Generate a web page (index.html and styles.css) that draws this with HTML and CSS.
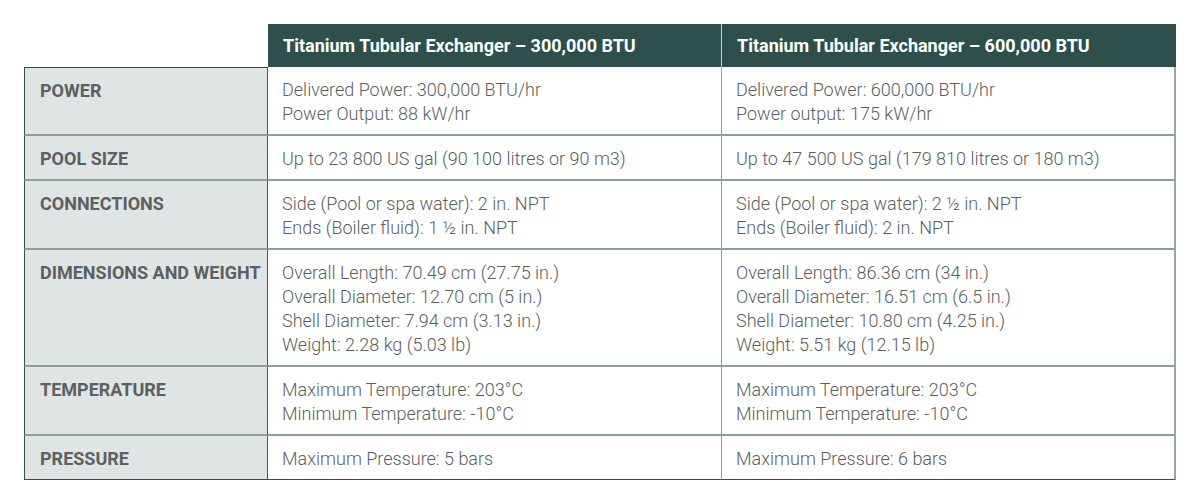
FILE: index.html
```html
<!DOCTYPE html>
<html>
<head>
<meta charset="utf-8">
<link rel="stylesheet" href="styles.css">
</head>
<body>
<div class="wrap">
<table class="specs">
  <colgroup>
    <col class="c-label">
    <col class="c-val">
    <col class="c-val">
  </colgroup>
  <thead>
    <tr>
      <th class="blank"></th>
      <th class="head">Titanium Tubular Exchanger – 300,000 BTU</th>
      <th class="head last">Titanium Tubular Exchanger – 600,000 BTU</th>
    </tr>
  </thead>
  <tbody>
    <tr>
      <th class="label">POWER</th>
      <td>Delivered Power: 300,000 BTU/hr<br>Power Output: 88 kW/hr</td>
      <td class="last">Delivered Power: 600,000 BTU/hr<br>Power output: 175 kW/hr</td>
    </tr>
    <tr>
      <th class="label">POOL SIZE</th>
      <td>Up to 23 800 US gal (90 100 litres or 90 m3)</td>
      <td class="last">Up to 47 500 US gal (179 810 litres or 180 m3)</td>
    </tr>
    <tr>
      <th class="label">CONNECTIONS</th>
      <td>Side (Pool or spa water): 2 in. NPT<br>Ends (Boiler fluid): 1 ½ in. NPT</td>
      <td class="last">Side (Pool or spa water): 2 ½ in. NPT<br>Ends (Boiler fluid): 2 in. NPT</td>
    </tr>
    <tr>
      <th class="label">DIMENSIONS AND WEIGHT</th>
      <td>Overall Length: 70.49 cm (27.75 in.)<br>Overall Diameter: 12.70 cm (5 in.)<br>Shell Diameter: 7.94 cm (3.13 in.)<br>Weight: 2.28 kg (5.03 lb)</td>
      <td class="last">Overall Length: 86.36 cm (34 in.)<br>Overall Diameter: 16.51 cm (6.5 in.)<br>Shell Diameter: 10.80 cm (4.25 in.)<br>Weight: 5.51 kg (12.15 lb)</td>
    </tr>
    <tr>
      <th class="label">TEMPERATURE</th>
      <td>Maximum Temperature: 203°C<br>Minimum Temperature: -10°C</td>
      <td class="last">Maximum Temperature: 203°C<br>Minimum Temperature: -10°C</td>
    </tr>
    <tr class="final">
      <th class="label">PRESSURE</th>
      <td>Maximum Pressure: 5 bars</td>
      <td class="last">Maximum Pressure: 6 bars</td>
    </tr>
  </tbody>
</table>
</div>
</body>
</html>
```

FILE: styles.css
```css
html, body {
  margin: 0;
  padding: 0;
  background: #ffffff;
}

body {
  font-family: Roboto, "Liberation Sans", sans-serif;
}

.wrap {
  padding: 24px 24px 0 24px;
}

.specs {
  border-collapse: separate;
  border-spacing: 0;
  width: 1152px;
  table-layout: fixed;
}

.c-label { width: 244px; }
.c-val { width: 454px; }

.specs th,
.specs td {
  text-align: left;
  vertical-align: top;
  font-size: 18px;
  line-height: 24px;
}

.blank {
  background: transparent;
  padding: 0;
}

.head {
  background: #2e4f4b;
  color: #ffffff;
  font-weight: 700;
  height: 43px;
  padding: 1px 15px 0 15px;
  vertical-align: middle !important;
  box-sizing: border-box;
  border-right: 1px solid #c9d3d1;
}

.head.last {
  border-right: none;
}

.label {
  background: #dfe5e5;
  color: #5b6060;
  font-weight: 700;
  padding: 11px 6px 8px 15px;
  border-left: 1px solid #2e4f4b;
  border-right: 1px solid #40605c;
  border-bottom: 2px solid #8d9e9b;
  white-space: nowrap;
}

.specs td {
  color: #5a5f5e;
  font-weight: 300;
  padding: 11px 15px 8px 14px;
  border-right: 1px solid #8d9e9b;
  border-bottom: 2px solid #8d9e9b;
}

.specs td.last {
  border-right: 2px solid #9aa7a5;
}

.specs tbody tr:first-child .label {
  border-top: 1px solid #2e4f4b;
}

.final .label,
.final td {
  border-bottom: 1px solid #2e4f4b !important;
}
```
